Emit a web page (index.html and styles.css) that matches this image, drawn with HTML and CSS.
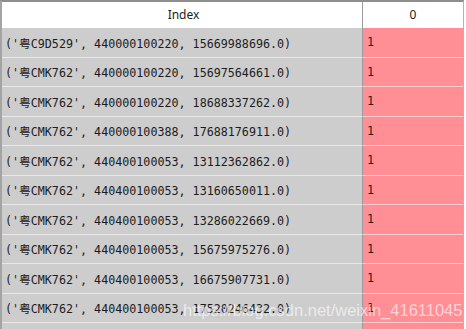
FILE: index.html
```html
<!DOCTYPE html>
<html lang="zh">

<head>
    <meta charset="UTF-8">
    <title>DataFrame</title>
    <link rel="stylesheet" href="styles.css">
</head>

<body>
    <div class="frame">
        <div class="grid">
            <div class="head head-index">Index</div>
            <div class="head head-value">0</div>

            <div class="cell idx">('粤C9D529', 440000100220, 15669988696.0)</div>
            <div class="cell val">1</div>
            <div class="cell idx">('粤CMK762', 440000100220, 15697564661.0)</div>
            <div class="cell val">1</div>
            <div class="cell idx">('粤CMK762', 440000100220, 18688337262.0)</div>
            <div class="cell val">1</div>
            <div class="cell idx">('粤CMK762', 440000100388, 17688176911.0)</div>
            <div class="cell val">1</div>
            <div class="cell idx">('粤CMK762', 440400100053, 13112362862.0)</div>
            <div class="cell val">1</div>
            <div class="cell idx">('粤CMK762', 440400100053, 13160650011.0)</div>
            <div class="cell val">1</div>
            <div class="cell idx">('粤CMK762', 440400100053, 13286022669.0)</div>
            <div class="cell val">1</div>
            <div class="cell idx">('粤CMK762', 440400100053, 15675975276.0)</div>
            <div class="cell val">1</div>
            <div class="cell idx">('粤CMK762', 440400100053, 16675907731.0)</div>
            <div class="cell val">1</div>
            <div class="cell idx">('粤CMK762', 440400100053, 17520246432.0)</div>
            <div class="cell val">1</div>
            <!-- next row only peeks in at the bottom edge -->
            <div class="cell idx"></div>
            <div class="cell val"></div>
        </div>
    </div>

    <!-- watermark over the table -->
    <div class="watermark">https://blog.csdn.net/weixin_41611045</div>
</body>

</html>
```

FILE: styles.css
```css
:root {
    --index-bg: #cdcdcd;
    --value-bg: #ff8f94;
    --frame: #8e8e8e;
    --divider: #9c9c9c;
    --text: #1c1c1c;
}

body {
    margin: 0;
    padding: 0;
    width: 466px;
    height: 329px;
    overflow: hidden;
    background-color: #ffffff;
    position: relative;
}

.frame {
    width: 461px;
    border-top: 2px solid var(--frame);
    border-left: 2px solid #a4a4a4;
    border-right: 1px solid #b4b4b4;
}

.grid {
    display: grid;
    grid-template-columns: 360px 101px;
    grid-auto-rows: 29.5px;
    grid-template-rows: 26px;
}

.head {
    font-family: 'Noto Sans', sans-serif;
    font-size: 12px;
    color: var(--text);
    text-align: center;
    background-color: #ffffff;
    padding-top: 3px;
    box-sizing: border-box;
    line-height: 20px;
}

.head-index {
    padding-left: 3px;
}

.head-value {
    border-left: 1px solid var(--divider);
}

.cell {
    font-family: 'DejaVu Sans Mono', 'Noto Sans CJK SC', monospace;
    font-size: 11.7px;
    color: var(--text);
    border-bottom: 1px solid rgba(255, 255, 255, 0.55);
    box-sizing: border-box;
    display: flex;
    align-items: center;
    white-space: nowrap;
}

.idx {
    background-color: var(--index-bg);
    padding-left: 3px;
}

.val {
    background-color: var(--value-bg);
    border-left: 1px solid var(--divider);
    padding-left: 4px;
}

.watermark {
    position: absolute;
    left: 183px;
    top: 301px;
    font-family: 'Liberation Sans', sans-serif;
    font-size: 16.5px;
    color: rgba(255, 255, 255, 0.62);
    white-space: nowrap;
}
```
